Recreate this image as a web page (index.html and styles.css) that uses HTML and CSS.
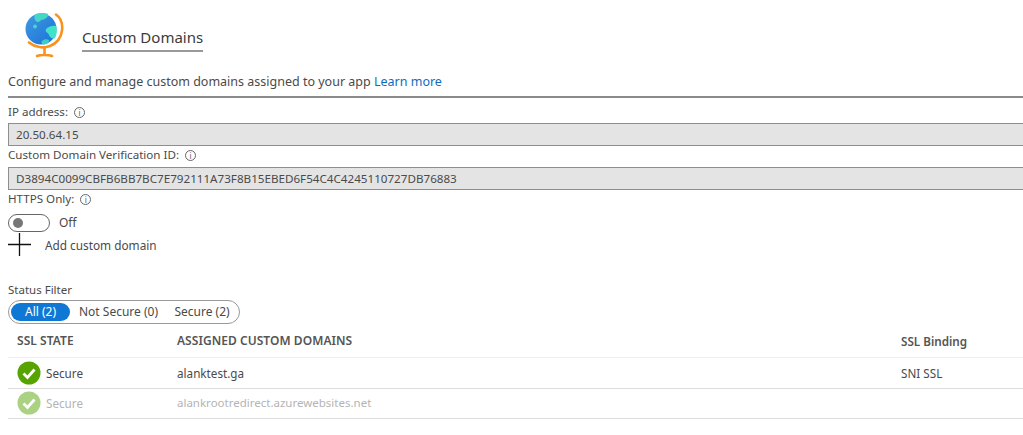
FILE: index.html
```html
<!DOCTYPE html>
<html lang="en">
<head>
<meta charset="utf-8">
<title>Custom Domains</title>
<link rel="stylesheet" href="styles.css">
</head>
<body>
<header class="head">
  <svg class="globe" viewBox="0 0 40 46" width="40" height="46" aria-hidden="true">
    <defs>
      <linearGradient id="sea" x1="0" y1="0" x2="1" y2="1">
        <stop offset="0" stop-color="#3f9be0"/>
        <stop offset="1" stop-color="#1c6fd8"/>
      </linearGradient>
    </defs>
    <circle cx="17" cy="17" r="15.500" fill="url(#sea)"/>
    <path d="M11 2.200C15 .5 22 .6 24 2c.5 2.600-2 5-5 5.400-3 .4-3.300 3-5.500 2.600C11 9.500 9.500 5 11 2.200z" fill="#45d6c8"/>
    <path d="M22 17c3-3 7-3.500 10-3 1.500 4 .8 9-1.200 12.500-3 .5-5-1-5.800-3.500-.4-2.200-4.500-3-3-6z" fill="#3fe3c6"/>
    <path d="M18 29c2-2 5-2 7-1 .6.800-.5 2.500-2 3.800-1.500.8-3.300 1-4 .6-1.500-.8-2-2.400-1-3.400z" fill="#38cfc6"/>
    <circle cx="11" cy="14.500" r="2" fill="#45d6c8"/>
    <path d="M32 2.500C37 6 38.800 12 38 18.500c-1 7.500-5.500 13-12 15.500-6.500 2.500-15 1.500-21-3.500" fill="none" stroke="#f7931e" stroke-width="2.600" stroke-linecap="round"/>
    <path d="M20.500 36v7M13 44c3-1.300 12-1.300 15 0" fill="none" stroke="#f7931e" stroke-width="2.600" stroke-linecap="round"/>
  </svg>
  <h1 class="title">Custom Domains</h1>
</header>

<p class="desc">Configure and manage custom domains assigned to your app <a class="link" href="#">Learn more</a></p>

<section class="fields">
  <div class="label">IP address: <span class="info">i</span></div>
  <div class="readonly">20.50.64.15</div>
  <div class="label">Custom Domain Verification ID: <span class="info">i</span></div>
  <div class="readonly">D3894C0099CBFB6BB7BC7E792111A73F8B15EBED6F54C4C4245110727DB76883</div>
  <div class="label">HTTPS Only: <span class="info">i</span></div>
  <div class="toggle-row">
    <span class="toggle"><span class="knob"></span></span>
    <span>Off</span>
  </div>
  <div class="add-row">
    <svg class="plus" viewBox="0 0 24 24" width="24" height="24" aria-hidden="true"><path d="M0 11.500h23M11.500 0v23" stroke="#111" stroke-width="1.300" fill="none"/></svg>
    <span>Add custom domain</span>
  </div>
</section>

<section class="filter">
  <div class="filter-label">Status Filter</div>
  <div class="pills">
    <span class="pill active">All (2)</span>
    <span class="pill pill-b">Not Secure (0)</span>
    <span class="pill pill-c">Secure (2)</span>
  </div>
</section>

<section class="table">
  <div class="row header">
    <div class="c1">SSL STATE</div>
    <div class="c2">ASSIGNED CUSTOM DOMAINS</div>
    <div class="c3">SSL Binding</div>
  </div>
  <div class="row">
    <div class="c1 state">
      <svg class="check" viewBox="0 0 24 24" width="24" height="24" aria-hidden="true"><circle cx="12" cy="12" r="11.500" fill="#57a300"/><path d="M6.500 12.500l4 4 7-8" fill="none" stroke="#fff" stroke-width="2.800"/></svg>
      <span>Secure</span>
    </div>
    <div class="c2">alanktest.ga</div>
    <div class="c3">SNI SSL</div>
  </div>
  <div class="row dim">
    <div class="c1 state">
      <svg class="check" viewBox="0 0 24 24" width="24" height="24" aria-hidden="true"><circle cx="12" cy="12" r="11.500" fill="#abd183"/><path d="M6.500 12.500l4 4 7-8" fill="none" stroke="#fff" stroke-width="2.800"/></svg>
      <span>Secure</span>
    </div>
    <div class="c2 url">alankrootredirect.azurewebsites.net</div>
    <div class="c3"></div>
  </div>
</section>
</body>
</html>
```
FILE: styles.css
```css
* { box-sizing: border-box; }
html, body { margin: 0; padding: 0; background: #fff; overflow: hidden; }
body {
  width: 1023px;
  height: 435px;
  font-family: "Noto Sans", "Open Sans", sans-serif;
  font-size: 12px;
  line-height: 16px;
  color: #4a4a4a;
}
.head { height: 70px; padding: 12px 0 0 24px; display: flex; align-items: flex-start; }
.globe { flex: none; }
.title {
  margin: 16px 0 0 18px;
  height: 24px;
  padding-bottom: 4px;
  font-size: 15px;
  line-height: 18px;
  font-weight: 400;
  color: #3b3b3b;
  border-bottom: 2px solid #999;
}
.desc {
  margin: 0;
  height: 26px;
  padding: 4px 0 0 8px;
  line-height: 16px;
  font-size: 12.500px;
}
.link { color: #0f6cbd; text-decoration: none; }
.fields { margin-left: 8px; border-top: 2px solid #8a8a8a; padding-top: 6px; }
.label { height: 20px; display: flex; align-items: flex-start; gap: 6px; font-size: 11.600px; line-height: 16px; }
.label:first-child { height: 19px; }
.info {
  width: 11px; height: 11px; margin-top: 3px;
  border: 1px solid #666; border-radius: 50%;
  font-size: 8px; line-height: 9px; text-align: center; color: #555;
}
.readonly {
  height: 23px;
  margin-bottom: 1px;
  padding: 3px 0 0 7px;
  background: #e4e4e4;
  border: 1px solid #8e8e8e;
  border-width: 1px 0 1px 1px;
  font-size: 11.650px;
}
.toggle-row { height: 24px; display: flex; align-items: center; gap: 9px; }
.toggle { width: 42px; height: 18px; border: 1px solid #666; border-radius: 9px; padding: 3px 0 0 4px; }
.knob { display: block; width: 10px; height: 10px; border-radius: 50%; background: #777; }
.add-row { height: 20px; display: flex; align-items: center; gap: 13px; font-size: 11.800px; }
.plus { flex: none; }
.filter { padding: 27px 0 0 8px; }
.filter-label { height: 18px; font-size: 11.500px; }
.pills {
  width: 232px; height: 24px; padding: 2px;
  border: 1px solid #999; border-radius: 12px;
  display: flex; align-items: center; font-size: 12px;
}
.pill { height: 18px; line-height: 18px; border-radius: 9px; text-align: center; }
.pill.active { width: 59px; background: #0f78d4; color: #fff; }
.pill-b { width: 97px; }
.pill-c { width: 66px; margin-left: 2px; }
.table { margin: 3px 0 0 8px; }
.row {
  height: 30.500px; display: flex; align-items: center;
  border-bottom: 1px solid #dcdcdc; font-size: 11.700px;
}
.row.header { height: 31px; padding-bottom: 3px; font-weight: 600; border-bottom-color: #eee; color: #555; }
.header .c1, .header .c2 { font-size: 12px; padding-top: 1px; letter-spacing: .05px; }
.row.dim { color: #b4b4b4; }
.c1 { width: 169px; padding-left: 9px; }
.c2 { width: 724px; }
.c3 { flex: 1; }
.row .url { font-size: 11.500px; }
.state { display: flex; align-items: center; gap: 5px; }
.check { flex: none; }
```
